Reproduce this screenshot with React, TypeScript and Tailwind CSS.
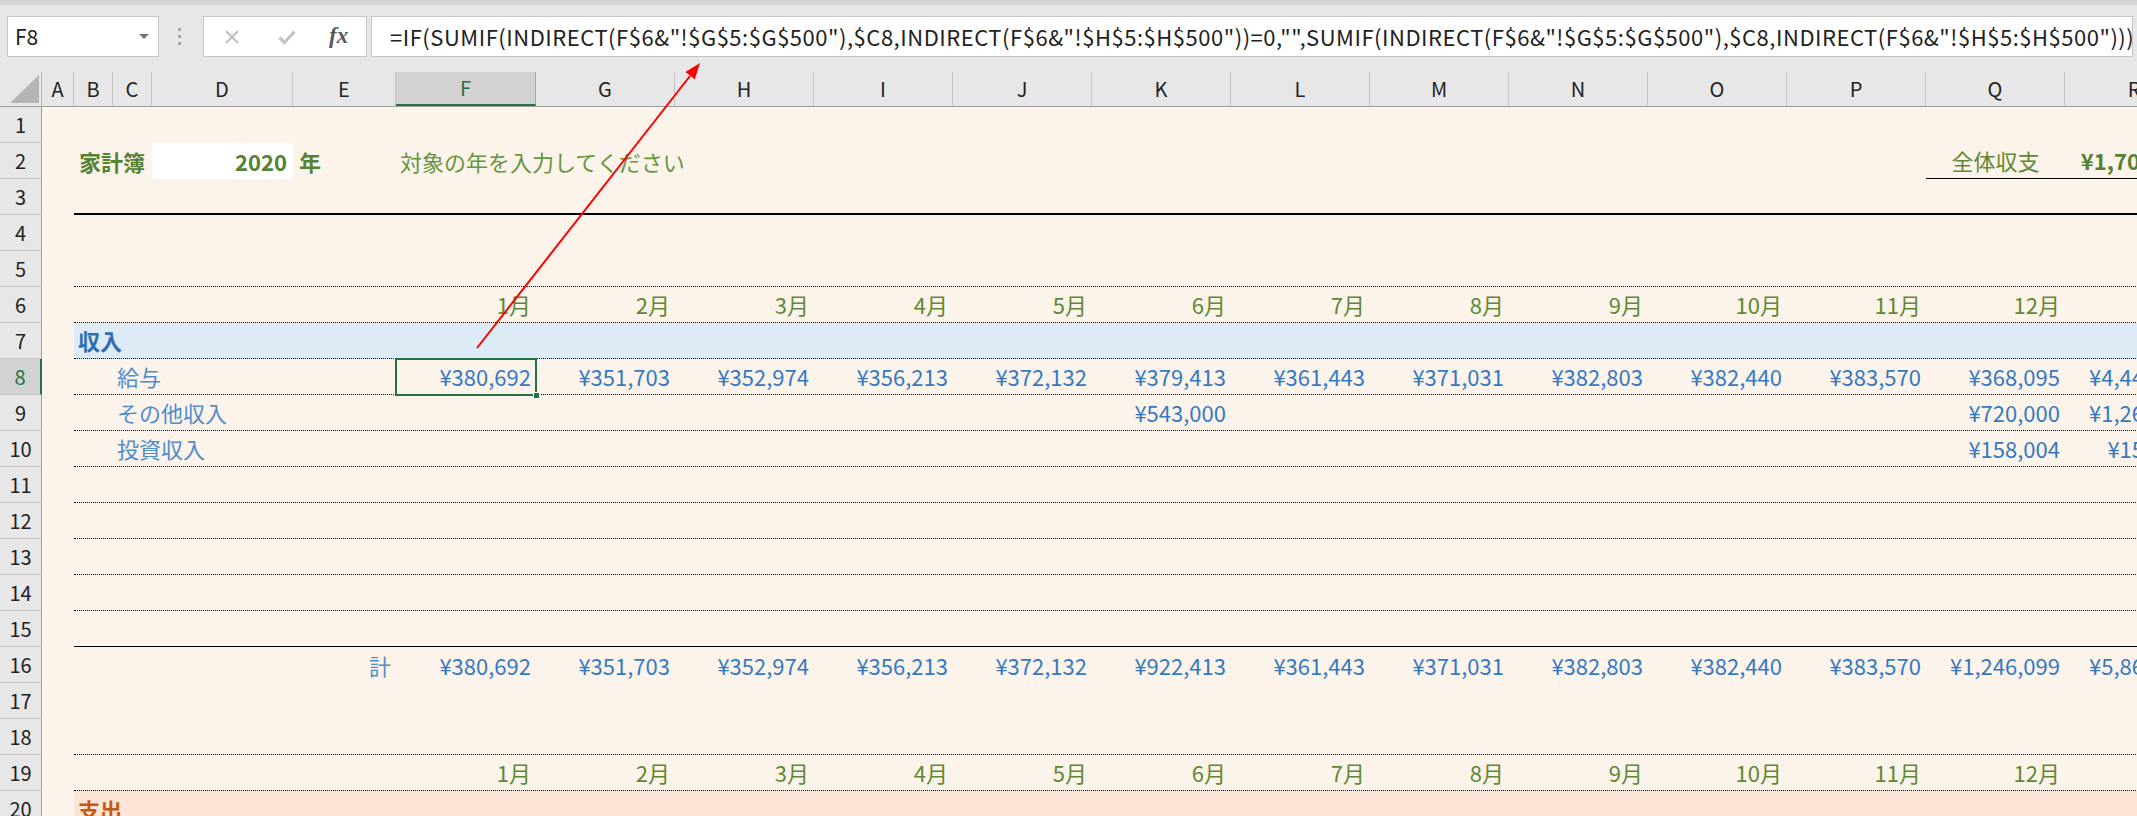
import type { ReactNode } from 'react';

type ColKey = 'B' | 'C' | 'D' | 'E' | 'F' | 'G' | 'H' | 'I' | 'J' | 'K' | 'L' | 'M' | 'N' | 'O' | 'P' | 'Q' | 'R';

const BODY_COLS: { k: ColKey; w: string }[] = [
  { k: 'B', w: 'w-[39px]' },
  { k: 'C', w: 'w-[39px]' },
  { k: 'D', w: 'w-[141px]' },
  { k: 'E', w: 'w-[103px]' },
  { k: 'F', w: 'w-[140px]' },
  { k: 'G', w: 'w-[139px]' },
  { k: 'H', w: 'w-[139px]' },
  { k: 'I', w: 'w-[139px]' },
  { k: 'J', w: 'w-[139px]' },
  { k: 'K', w: 'w-[139px]' },
  { k: 'L', w: 'w-[139px]' },
  { k: 'M', w: 'w-[139px]' },
  { k: 'N', w: 'w-[139px]' },
  { k: 'O', w: 'w-[139px]' },
  { k: 'P', w: 'w-[139px]' },
  { k: 'Q', w: 'w-[139px]' },
  { k: 'R', w: 'w-[139px]' },
];

const MONTH_COLS: ColKey[] = ['F', 'G', 'H', 'I', 'J', 'K', 'L', 'M', 'N', 'O', 'P', 'Q'];

const yen = (n: number) => '¥' + n.toLocaleString('en-US');

const salary = [380692, 351703, 352974, 356213, 372132, 379413, 361443, 371031, 382803, 382440, 383570, 368095];
const totals = [380692, 351703, 352974, 356213, 372132, 922413, 361443, 371031, 382803, 382440, 383570, 1246099];

type CellMap = Partial<Record<ColKey, ReactNode>>;

function Num({ v }: { v: number }) {
  return <span className="ml-auto pr-[5px] text-[#3579c2]">{yen(v)}</span>;
}

function monthsRow(): CellMap {
  const m: CellMap = {};
  MONTH_COLS.forEach((k, i) => {
    m[k] = <span className="ml-auto pr-[5px] text-[#5c8a34]">{i + 1}月</span>;
  });
  return m;
}

function valuesRow(vals: number[], extra: number): CellMap {
  const m: CellMap = {};
  MONTH_COLS.forEach((k, i) => {
    m[k] = <Num v={vals[i]} />;
  });
  m.R = <Num v={extra} />;
  return m;
}

const rows: { n: number; line: string; bg: string; cells: CellMap; cellCls?: Partial<Record<ColKey, string>> }[] = [
  { n: 1, line: '', bg: '', cells: {} },
  {
    n: 2,
    line: '',
    bg: '',
    cells: {
      B: <span className="pl-[5px] font-bold text-[#548235]">家計簿</span>,
      D: <span className="ml-auto pr-[6px] font-bold text-[#548235]">2020</span>,
      E: <span className="pl-[6px] font-bold text-[#548235]">年</span>,
      F: <span className="pl-[4px] text-[#64963c]">対象の年を入力してください</span>,
      Q: <span className="mx-auto text-[#5c8a34]">全体収支</span>,
      R: <span className="ml-auto pr-[5px] font-bold text-[#548235]">¥1,704,862</span>,
    },
    cellCls: { D: 'bg-white', Q: 'border-b border-black', R: 'border-b border-black' },
  },
  { n: 3, line: 'border-b-2 border-black', bg: '', cells: {} },
  { n: 4, line: '', bg: '', cells: {} },
  { n: 5, line: 'border-b border-dotted border-black', bg: '', cells: {} },
  { n: 6, line: 'border-b border-dotted border-black', bg: '', cells: monthsRow() },
  {
    n: 7,
    line: 'border-b border-dotted border-black',
    bg: 'bg-[#ddebf7]',
    cells: { B: <span className="pl-[4px] font-bold text-[#2f6fb0]">収入</span> },
  },
  {
    n: 8,
    line: 'border-b border-dotted border-black',
    bg: '',
    cells: {
      C: <span className="pl-[4px] text-[#4f8dcc]">給与</span>,
      ...valuesRow(salary, 4442509),
    },
  },
  {
    n: 9,
    line: 'border-b border-dotted border-black',
    bg: '',
    cells: {
      C: <span className="pl-[4px] text-[#4f8dcc]">その他収入</span>,
      K: <Num v={543000} />,
      Q: <Num v={720000} />,
      R: <Num v={1263000} />,
    },
  },
  {
    n: 10,
    line: 'border-b border-dotted border-black',
    bg: '',
    cells: {
      C: <span className="pl-[4px] text-[#4f8dcc]">投資収入</span>,
      Q: <Num v={158004} />,
      R: <Num v={158004} />,
    },
  },
  { n: 11, line: 'border-b border-dotted border-black', bg: '', cells: {} },
  { n: 12, line: 'border-b border-dotted border-black', bg: '', cells: {} },
  { n: 13, line: 'border-b border-dotted border-black', bg: '', cells: {} },
  { n: 14, line: 'border-b border-dotted border-black', bg: '', cells: {} },
  { n: 15, line: 'border-b border-black', bg: '', cells: {} },
  {
    n: 16,
    line: '',
    bg: '',
    cells: {
      E: <span className="ml-auto pr-[5px] text-[#4f8dcc]">計</span>,
      ...valuesRow(totals, 5863513),
    },
  },
  { n: 17, line: '', bg: '', cells: {} },
  { n: 18, line: 'border-b border-dotted border-black', bg: '', cells: {} },
  { n: 19, line: 'border-b border-dotted border-black', bg: '', cells: monthsRow() },
  {
    n: 20,
    line: '',
    bg: 'bg-[#fce4d6]',
    cells: { B: <span className="pl-[4px] font-bold text-[#c65911]">支出</span> },
  },
];

const HEAD_COLS: { k: string; w: string }[] = [{ k: 'A', w: 'w-[32px]' }, ...BODY_COLS];

function FormulaBar() {
  return (
    <div className="h-[72px] bg-[#e7e7e7]">
      <div className="h-[5px] bg-[#d5d5d5]" />
      <div className="flex items-start pt-[11px]">
        <div className="ml-[7px] flex h-[41px] w-[152px] items-center border border-[#c6c6c6] bg-white pl-[7px] text-[21px] text-[#222]">
          <span>F8</span>
          <span className="ml-auto mr-[9px] border-x-[5px] border-t-[5px] border-x-transparent border-t-[#777]" />
        </div>
        <div className="ml-[19px] mt-[12px] flex flex-col gap-[4px]">
          <span className="h-[3px] w-[3px] bg-[#a6a6a6]" />
          <span className="h-[3px] w-[3px] bg-[#a6a6a6]" />
          <span className="h-[3px] w-[3px] bg-[#a6a6a6]" />
        </div>
        <div className="ml-[22px] flex h-[41px] w-[164px] items-center border border-[#c6c6c6] bg-white">
          <svg className="ml-[20px]" width="16" height="16" viewBox="0 0 16 16">
            <path d="M2 2 L14 14 M14 2 L2 14" stroke="#bdbdbd" strokeWidth="1.8" fill="none" />
          </svg>
          <svg className="ml-[38px]" width="18" height="16" viewBox="0 0 18 16">
            <path d="M1.5 8.5 L6.5 13.5 L16.5 2.5" stroke="#c4c4c4" strokeWidth="3.2" fill="none" />
          </svg>
          <span className="ml-[33px] font-['Liberation_Serif',serif] text-[23px] font-bold italic text-[#5a5a5a]">fx</span>
        </div>
        <div className="ml-[4px] mr-[4px] flex h-[41px] flex-1 items-center overflow-hidden whitespace-nowrap border border-[#c6c6c6] bg-white pl-[18px] text-[22px] tracking-[0.52px] text-[#222]">
          =IF(SUMIF(INDIRECT(F$6&amp;"!$G$5:$G$500"),$C8,INDIRECT(F$6&amp;"!$H$5:$H$500"))=0,"",SUMIF(INDIRECT(F$6&amp;"!$G$5:$G$500"),$C8,INDIRECT(F$6&amp;"!$H$5:$H$500")))
        </div>
      </div>
    </div>
  );
}

function ColumnHeader() {
  return (
    <div className="flex h-[35px] border-b border-[#9e9e9e] bg-[#e7e7e7] text-[20px] text-[#222]">
      <div className="relative w-[42px] shrink-0 border-r border-[#b8b8b8]">
        <svg className="absolute bottom-[3px] right-[2px]" width="29" height="28" viewBox="0 0 29 28">
          <polygon points="29,0 29,28 0,28" fill="#b4b4b4" />
        </svg>
      </div>
      {HEAD_COLS.map((c) =>
        c.k === 'F' ? (
          <div
            key={c.k}
            className={`${c.w} flex shrink-0 items-center justify-center border-b-2 border-r border-b-[#217346] border-r-[#a8a8a8] bg-[#d2d2d2] text-[#217346]`}
          >
            {c.k}
          </div>
        ) : (
          <div key={c.k} className={`${c.w} flex shrink-0 items-center justify-center border-r border-[#c4c4c4]`}>
            {c.k}
          </div>
        ),
      )}
    </div>
  );
}

function SheetRow({ r }: { r: (typeof rows)[number] }) {
  const selected = r.n === 8;
  return (
    <div className="flex h-[36px]">
      <div
        className={
          selected
            ? 'flex w-[42px] shrink-0 items-center justify-center border-b border-r-2 border-b-[#c4c4c4] border-r-[#217346] bg-[#d2d2d2] text-[20px] text-[#217346]'
            : 'flex w-[42px] shrink-0 items-center justify-center border-b border-r border-b-[#c8c8c8] border-r-[#9e9e9e] bg-[#e7e7e7] text-[20px] text-[#222]'
        }
      >
        {r.n}
      </div>
      <div className="w-[32px] shrink-0" />
      <div className={`flex flex-1 ${r.line} ${r.bg}`}>
        {BODY_COLS.map((c) => (
          <div
            key={c.k}
            className={`${c.w} relative flex shrink-0 items-center whitespace-nowrap text-[22px] ${r.cellCls?.[c.k] ?? ''}`}
          >
            {r.cells[c.k]}
            {selected && c.k === 'F' && (
              <div className="absolute -left-px -top-px bottom-[-2px] right-[-1px] border-2 border-[#217346]">
                <div className="absolute bottom-[-5px] right-[-5px] h-[7px] w-[7px] border border-white bg-[#217346]" />
              </div>
            )}
          </div>
        ))}
      </div>
    </div>
  );
}

export default function App() {
  return (
    <div className="relative h-[816px] w-[2137px] overflow-hidden bg-[#fcf3ea] font-['Noto_Sans_CJK_JP','Noto_Sans',sans-serif]">
      <FormulaBar />
      <ColumnHeader />
      <div>
        {rows.map((r) => (
          <SheetRow key={r.n} r={r} />
        ))}
      </div>
      <svg className="pointer-events-none absolute left-0 top-0" width="2137" height="816">
        <line x1="477" y1="348" x2="690" y2="76" stroke="#ff0000" strokeWidth="2" />
        <polygon points="700,63 694.8,79.3 685.4,71.9" fill="#ff0000" />
      </svg>
    </div>
  );
}
